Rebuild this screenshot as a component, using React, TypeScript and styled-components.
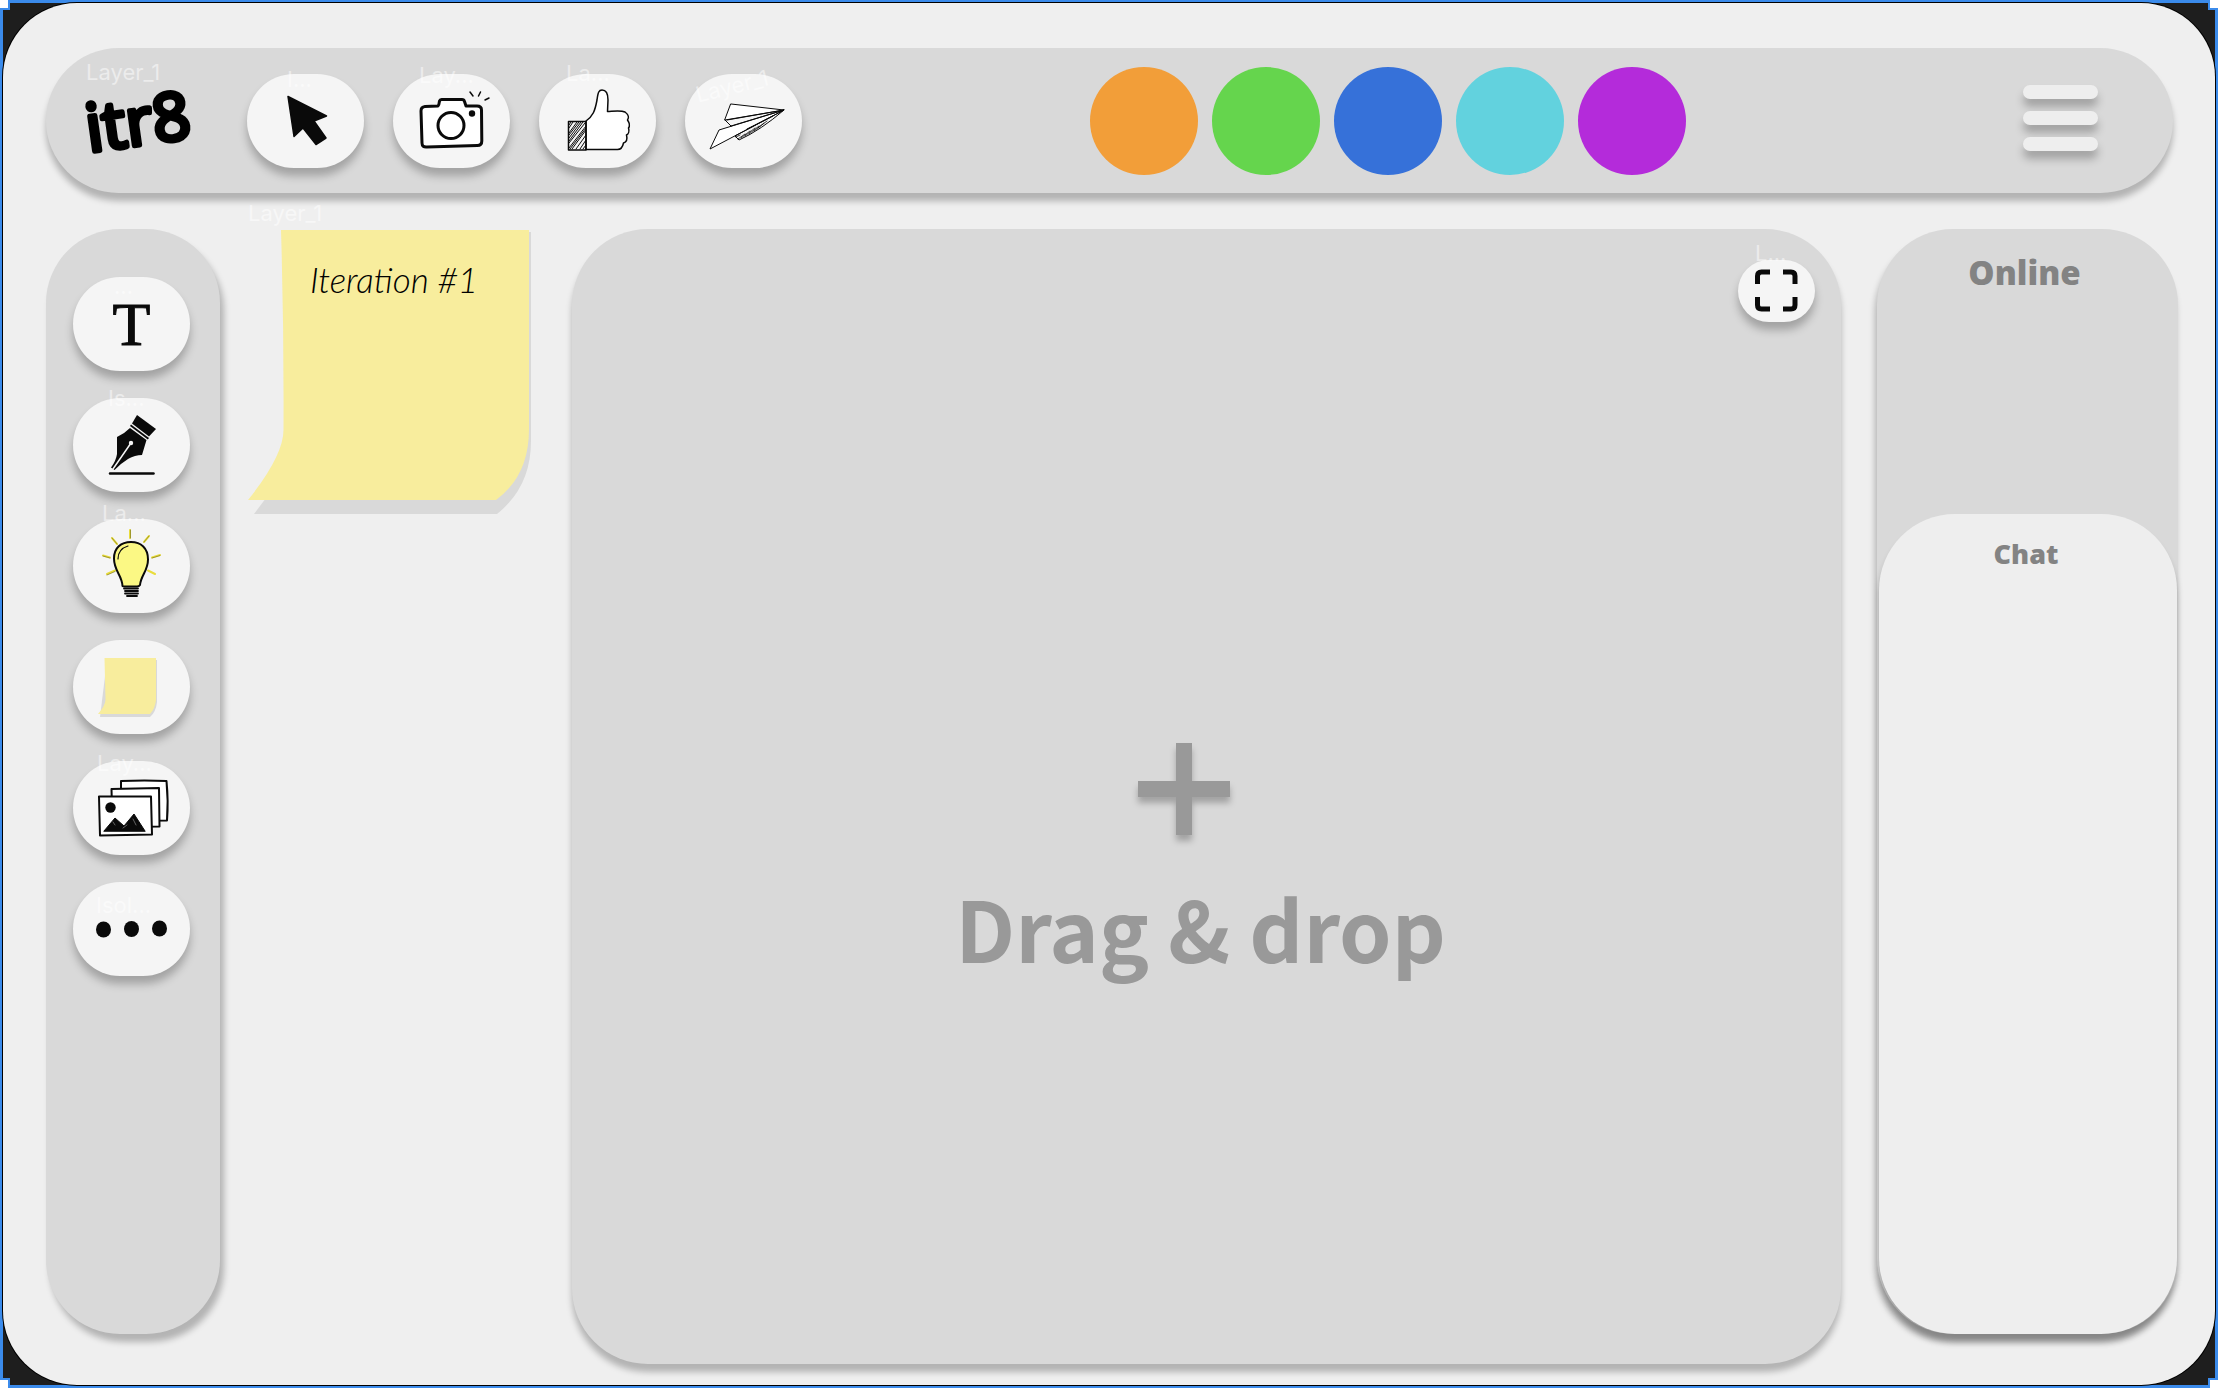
import React from "react";
import styled, { createGlobalStyle } from "styled-components";

const ink = "#0a0a0a";
const dropShadow = "0 8px 8px rgba(0, 0, 0, 0.25)";

const GlobalStyle = createGlobalStyle`
  *, *::before, *::after { box-sizing: border-box; }
  body {
    margin: 0;
    background: #1e1e1e;
    font-family: "Liberation Sans", Arial, sans-serif;
  }
  button { font: inherit; color: inherit; }
`;

const Selection = styled.div`
  position: relative;
  display: flex;
  min-height: 100vh;
  border: 3px solid #3b8beb;
  background: #1e1e1e;
`;

const Handle = styled.span<{ $v: "top" | "bottom"; $h: "left" | "right" }>`
  position: absolute;
  ${(p) => p.$v}: -5px;
  ${(p) => p.$h}: -5px;
  width: 12px;
  height: 12px;
  border: 2px solid #3b8beb;
  background: #fff;
`;

const Board = styled.div`
  flex: 1;
  display: flex;
  flex-direction: column;
  gap: 36px;
  padding: 45px 37px 21px 43px;
  border-radius: 74px;
  background: #efefef;
  box-shadow: 0 0 0 1px #000;
`;

const Header = styled.header`
  display: flex;
  align-items: center;
  height: 145px;
  margin-right: 5px;
  padding: 0 75px 0 40px;
  border-radius: 73px;
  background: #d9d9d9;
  box-shadow: 0 8px 6px rgba(0, 0, 0, 0.25);
`;

const Logo = styled.a`
  position: relative;
  flex: 0 0 161px;
  color: #000;
  text-decoration: none;

  svg { display: block; overflow: visible; }
  text {
    font: 400 66px "Open Sans", sans-serif;
    fill: currentColor;
    stroke: currentColor;
    stroke-width: 5px;
    stroke-linejoin: round;
  }
`;

const LayerTag = styled.span<{ $x: number; $y: number; $tilt?: number }>`
  position: absolute;
  left: ${(p) => p.$x}px;
  top: ${(p) => p.$y}px;
  color: rgba(255, 255, 255, 0.5);
  font: 400 22px/26px Inter, sans-serif;
  white-space: nowrap;
  pointer-events: none;
  transform: rotate(${(p) => p.$tilt ?? 0}deg);
`;

const TopTools = styled.nav`
  display: flex;
  gap: 29px;
`;

const Tool = styled.button`
  position: relative;
  flex: none;
  width: 117px;
  height: 94px;
  padding: 0;
  border: 0;
  border-radius: 47px;
  background: #f5f5f5;
  box-shadow: ${dropShadow};
  cursor: pointer;

  svg { display: block; }
`;

const TextGlyph = styled.span`
  display: block;
  color: ${ink};
  font: 400 62px/94px "Liberation Serif", serif;
  -webkit-text-stroke: 1px ${ink};
`;

const Swatches = styled.div`
  display: flex;
  gap: 14px;
  margin-left: 288px;
`;

const Swatch = styled.button<{ $color: string }>`
  width: 108px;
  height: 108px;
  padding: 0;
  border: 0;
  border-radius: 50%;
  background: ${(p) => p.$color};
  cursor: pointer;
`;

const MenuButton = styled.button`
  display: grid;
  gap: 12px;
  width: 75px;
  margin: 0 0 6px auto;
  padding: 0;
  border: 0;
  background: none;
  cursor: pointer;
`;

const MenuBar = styled.span`
  height: 14px;
  border-radius: 7px;
  background: #eee;
  box-shadow: ${dropShadow};
`;

const Workspace = styled.main`
  flex: 1;
  display: flex;
  align-items: stretch;
`;

const Sidebar = styled.nav`
  flex: none;
  display: flex;
  flex-direction: column;
  align-items: flex-start;
  gap: 27px;
  width: 174px;
  margin-bottom: 30px;
  padding: 48px 27px;
  border-radius: 74px;
  background: #d9d9d9;
  box-shadow: 4px 8px 6px rgba(0, 0, 0, 0.25);
`;

const Notes = styled.section`
  flex: none;
  width: 283px;
  margin: 0 41px 0 28px;
`;

const Sticky = styled.article`
  position: relative;
  display: grid;

  > * { grid-area: 1 / 1; }
`;

const StickyTitle = styled.h2`
  margin: 0;
  padding: 26px 0 0 62px;
  color: #000;
  font: italic 300 35px/48px Lato, sans-serif;
`;

const Canvas = styled.section`
  flex: 1;
  display: flex;
  flex-direction: column;
  padding: 31px 26px;
  border-radius: 76px;
  background: #d9d9d9;
  box-shadow: 0 8px 6px rgba(0, 0, 0, 0.25);
`;

const ExpandButton = styled(Tool)`
  align-self: flex-end;
  width: 77px;
  height: 62px;
`;

const DropZone = styled.div`
  display: flex;
  flex-direction: column;
  align-items: center;
  gap: 32px;
  margin-top: 421px;
  padding-right: 12px;
  color: #999;
`;

const AddButton = styled.button`
  margin-right: 34px;
  padding: 0;
  border: 0;
  background: none;
  cursor: pointer;

  svg {
    display: block;
    filter: drop-shadow(0 6px 3px rgba(0, 0, 0, 0.25));
  }
`;

const DropText = styled.p`
  margin: 0;
  font: 700 84px/120px "Noto Sans CJK SC", "Liberation Sans", sans-serif;
  white-space: nowrap;
`;

const People = styled.aside`
  flex: none;
  display: flex;
  flex-direction: column;
  width: 301px;
  margin: 0 0 30px 36px;
  border-radius: 76px;
  background: #d9d9d9;
  box-shadow: -2px 8px 6px rgba(0, 0, 0, 0.25);
  color: #838383;
  text-align: center;
`;

const Online = styled.section`
  height: 285px;
  padding: 24px 6px 0 0;
`;

const Chat = styled.section`
  flex: 1;
  margin: 0 1px 0 2px;
  padding: 20px 4px 0 0;
  border-radius: 76px;
  background: #eee;
  box-shadow: 0 8px 6px rgba(0, 0, 0, 0.25);
`;

const PanelTitle = styled.h2<{ $size: number }>`
  margin: 0;
  font-family: "Open Sans", "Liberation Sans", sans-serif;
  font-weight: 800;
  font-size: ${(p) => p.$size}px;
  line-height: 40px;
`;

function Icon({ children }: { children: React.ReactNode }) {
  return (
    <svg width="117" height="94" viewBox="0 0 117 94" fill="none" stroke={ink} strokeLinecap="round" strokeLinejoin="round" aria-hidden="true">
      {children}
    </svg>
  );
}

const CursorIcon = () => (
  <Icon>
    <path d="M41 22.500 79.500 42 67 47 79 64 69 70.500 56 54 47 62.500Z" fill={ink} strokeWidth="1.500" />
  </Icon>
);

const CameraIcon = () => (
  <Icon>
    <path d="M32 32.500 45 32q1-1 1.500-5 .500-1.500 2-1.500H69q2 0 2.500 2l1.500 4.500H84q4.500 0 4.500 4l.300 31q0 4.500-4.500 4.500L34 73q-5 .500-5-4l-1-32q0-4 4-4.500Z" fill="#fff" strokeWidth="3" />
    <circle cx="58" cy="51.500" r="13" strokeWidth="3" />
    <circle cx="79" cy="39.500" r="3.200" fill={ink} stroke="none" />
    <path d="M77 18l3 4M87.500 18l-2 4M92 26l4-2" strokeWidth="1.500" />
  </Icon>
);

const ThumbIcon = () => (
  <Icon>
    <path d="M47 47C54 42 56 37 58 26c1-8 2-10 5-10 5 0 6 5 6 10l-.500 11.500C76 37 82 36 86 38c4 3 4 6 2.500 8 2 3 2.500 6 1 8 1 3 0 6-2 7 1 4 0 7-3 8-1 5-3 6.500-6 6.500H62L47 75.500Z" fill="#fff" strokeWidth="1.500" />
    <path d="M29.500 47.500H47V76H29.500Z" strokeWidth="1.500" />
    <path d="M30 54l4-6M30 59l8-11M30 64l12-16M30 69l16-20M30 74l17-22M33 75l14-19M37 75l10-14M41 75l6-9M44 75l3-4M30 51l2-3M30 61l10-13M30 67l14-19M31 75l16-21" strokeWidth="1" />
  </Icon>
);

const PlaneIcon = () => (
  <Icon>
    <path d="M46 30 99 36 34 56 25 75 99 36 40 46ZM40 46l6 6" fill="#fff" strokeWidth="1" />
    <path d="M42 46 99 36 46 52M99 36 50 62l4 4q22-10 45-30M62 55l26-13" strokeWidth="1" />
    <path d="M51 63l4-2M53 65l7-5M56 64l9-7M60 62l10-8M64 60l10-8M69 57l10-8M73 54l9-7" strokeWidth=".8" />
  </Icon>
);

const PenIcon = () => (
  <Icon>
    <g fill={ink} stroke="none">
      <path d="M64 17 83 31 76 38.500 59 25.500Z" />
      <path d="M58 26.500 76 40l-1.200 1.500L57 28Z" />
      <path d="M57 30 73.500 42 69 57Q62 57 55 61 47 66 41.500 72L38 69.500Q43 63 44 56V39Q51 36 57 30Z" />
      <circle cx="58" cy="45" r="2.200" fill="#f5f5f5" />
    </g>
    <path d="M58 45 40 71" stroke="#f5f5f5" strokeWidth="1.500" />
    <path d="M37 75.500H80.500" strokeWidth="2.500" />
  </Icon>
);

const BulbIcon = () => (
  <Icon>
    <path d="M57 11v8M39 19l5 6M76 17l-5 6M30 36.500l7 2M87 36l-8 2.500M34 55l8-3.500M82 55l-7-3.500" stroke="#e9dc3c" strokeWidth="2" />
    <path d="M57.500 11v8M39 19l5 6M76 17l-5 6M30 37l7 2M87 36.500l-8 2.500M34 56l8-3.500" stroke="#6d6920" strokeWidth=".6" />
    <path d="M49.500 67C49 56 41 52 41 39.500 41 29 48 23 58 23S75 29 75 40.500C75 52 68 56 67 66q-1 1.500-3 1.500H52Q50 67.500 49.500 67Z" fill="#fbf884" strokeWidth="2" />
    <path d="M45 40q0-10 10-13" strokeWidth="1.200" />
    <path d="M51 69.500H65M52 72H65M52 74.500H65M54 77H64" strokeWidth="1.800" />
  </Icon>
);

const NoteIcon = () => (
  <Icon>
    <path d="M27 77H77Q83 72 84 62V20H34Z" fill="#d9d9d9" stroke="none" />
    <path d="M31.500 18H83V60Q82 69 77 74H25Q32 66 32.500 60Z" fill="#f8ed9d" stroke="none" />
  </Icon>
);

const ImagesIcon = () => (
  <Icon>
    <g fill="#fff" strokeWidth="2">
      <path d="M48 20q24-1 45.500 0 2 20 .500 39.500L48 60Z" />
      <path d="M38.500 28 86 27l.500 38.500-47 .500Z" />
      <path d="M26 35.500 78 35.500 79 73.500 27 74.500Z" />
    </g>
    <circle cx="37.500" cy="46.500" r="5.200" fill={ink} stroke="none" />
    <path d="M31 70 42 57 51 65 61 53 72 70Z" fill={ink} strokeWidth="1" />
    <path d="M40 61l2 3M60 58l3 6M50 67l4-3" stroke="#888" strokeWidth=".7" />
  </Icon>
);

const MoreIcon = () => (
  <Icon>
    <g fill={ink} stroke="none">
      <ellipse cx="30.500" cy="47.500" rx="7.500" ry="8" />
      <ellipse cx="58.500" cy="47" rx="7.500" ry="8" />
      <ellipse cx="86.500" cy="46.500" rx="7.500" ry="8" />
    </g>
  </Icon>
);

type ToolSpec = { name: string; icon: React.ReactNode; tag?: string; x?: number; y?: number; tilt?: number };

const topTools: ToolSpec[] = [
  { name: "Select", icon: <CursorIcon />, tag: "I...", x: 40, y: -8 },
  { name: "Camera", icon: <CameraIcon />, tag: "Lay...", x: 26, y: -12 },
  { name: "Like", icon: <ThumbIcon />, tag: "La...", x: 27, y: -14 },
  { name: "Send", icon: <PlaneIcon />, tag: "Layer_1", x: 10, y: -1, tilt: -14 },
];

const sideTools: ToolSpec[] = [
  { name: "Text", icon: <TextGlyph>T</TextGlyph>, tag: "...", x: 41, y: -4 },
  { name: "Pen", icon: <PenIcon />, tag: "Is...", x: 35, y: -13 },
  { name: "Idea", icon: <BulbIcon />, tag: "La...", x: 29, y: -19 },
  { name: "Sticky note", icon: <NoteIcon /> },
  { name: "Images", icon: <ImagesIcon />, tag: "Lay...", x: 24, y: -11 },
  { name: "More", icon: <MoreIcon />, tag: "Isol...", x: 23, y: 10 },
];

const colors = [
  { name: "Orange", value: "#f29e39" },
  { name: "Green", value: "#65d54d" },
  { name: "Blue", value: "#3671d9" },
  { name: "Cyan", value: "#62d2de" },
  { name: "Purple", value: "#b42bda" },
];

const renderTool = (t: ToolSpec) => (
  <Tool key={t.name} type="button" aria-label={t.name}>
    {t.icon}
    {t.tag && <LayerTag $x={t.x ?? 0} $y={t.y ?? 0} $tilt={t.tilt}>{t.tag}</LayerTag>}
  </Tool>
);

export default function App() {
  return (
    <>
      <GlobalStyle />
      <Selection>
        <Board>
          <Header>
            <Logo href="#home">
              <LayerTag $x={0} $y={-26}>Layer_1</LayerTag>
              <svg width="110" height="72" viewBox="0 0 110 72">
                <text x="3" y="67" transform="rotate(-8 3 67)">itr8</text>
              </svg>
            </Logo>
            <TopTools aria-label="Actions">{topTools.map(renderTool)}</TopTools>
            <Swatches>
              {colors.map((c) => (
                <Swatch key={c.name} type="button" aria-label={c.name} $color={c.value} />
              ))}
            </Swatches>
            <MenuButton type="button" aria-label="Menu">
              <MenuBar />
              <MenuBar />
              <MenuBar />
            </MenuButton>
          </Header>
          <Workspace>
            <Sidebar aria-label="Insert">{sideTools.map(renderTool)}</Sidebar>
            <Notes>
              <Sticky>
                <svg width="284" height="285" viewBox="0 0 284 285" aria-hidden="true">
                  <path d="M6 285H249Q283 258 283 212V3H36V245Z" fill="#d9d9d9" />
                  <path d="M33 1H281V200Q281 247 248 271H0Q36 226 35.500 200Q36 100 33 1Z" fill="#f8ed9d" />
                </svg>
                <StickyTitle>Iteration #1</StickyTitle>
                <LayerTag $x={0} $y={-29}>Layer_1</LayerTag>
              </Sticky>
            </Notes>
            <Canvas>
              <ExpandButton type="button" aria-label="Full screen">
                <svg width="77" height="62" viewBox="0 0 77 62" fill="none" stroke={ink} strokeWidth="5" aria-hidden="true">
                  <path d="M19.500 24V16q0-4 4-4H32M45 12h8q4 0 4 4v8M57 37v8q0 4-4 4H45M32 49H23.500q-4 0-4-4V37" />
                </svg>
                <LayerTag $x={17} $y={-20}>L...</LayerTag>
              </ExpandButton>
              <DropZone>
                <AddButton type="button" aria-label="Add file">
                  <svg width="92" height="92" viewBox="0 0 92 92" aria-hidden="true">
                    <path d="M38 0H54V38H92V54H54V92H38V54H0V38H38Z" fill="#999" />
                  </svg>
                </AddButton>
                <DropText>Drag &amp; drop</DropText>
              </DropZone>
            </Canvas>
            <People>
              <Online>
                <PanelTitle $size={33}>Online</PanelTitle>
              </Online>
              <Chat>
                <PanelTitle $size={27}>Chat</PanelTitle>
              </Chat>
            </People>
          </Workspace>
        </Board>
        <Handle $v="top" $h="left" />
        <Handle $v="top" $h="right" />
        <Handle $v="bottom" $h="left" />
        <Handle $v="bottom" $h="right" />
      </Selection>
    </>
  );
}
